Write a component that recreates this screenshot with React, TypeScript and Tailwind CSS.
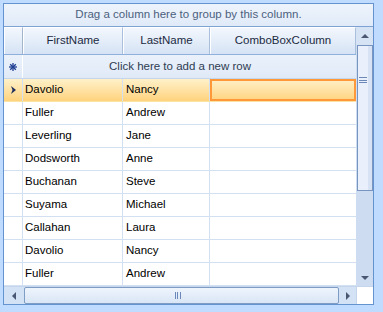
import React from "react";

const rows = [
  ["Davolio", "Nancy"],
  ["Fuller", "Andrew"],
  ["Leverling", "Jane"],
  ["Dodsworth", "Anne"],
  ["Buchanan", "Steve"],
  ["Suyama", "Michael"],
  ["Callahan", "Laura"],
  ["Davolio", "Nancy"],
  ["Fuller", "Andrew"],
];

const Arrow = ({ dir }: { dir: "up" | "down" | "left" | "right" }) => {
  const pts = {
    up: "0,4 4,0 8,4",
    down: "0,0 8,0 4,4",
    left: "4,0 4,8 0,4",
    right: "0,0 0,8 4,4",
  }[dir];
  const vertical = dir === "up" || dir === "down";
  return (
    <svg width={vertical ? 8 : 4} height={vertical ? 4 : 8} viewBox={vertical ? "0 0 8 4" : "0 0 4 8"}>
      <polygon points={pts} fill="#4b5673" />
    </svg>
  );
};

export default function App() {
  return (
    <div className="w-[383px] h-[312px] bg-[#bfdbff] pt-[3px] pl-[3px] font-['Liberation_Sans',sans-serif] text-[11.5px] text-black">
      <div className="w-[371px] h-[302px] border border-[#6593cf] bg-white flex flex-col">
        {/* Group panel */}
        <div className="h-[23px] border-b border-[#7ea3d3] bg-gradient-to-b from-[#eef4fc] to-[#e0eaf8] flex items-center justify-center text-[#4c5f7e]">
          Drag a column here to group by this column.
        </div>

        <div className="flex h-[259px]">
          {/* Grid */}
          <div className="w-[352px] flex flex-col">
            {/* Header */}
            <div className="flex h-[28px] border-b border-[#8fb0dc]">
              <div className="w-[19px] border-r border-[#a3b5ca] bg-gradient-to-b from-[#f3f7fd] to-[#d5e3f5] border-l border-l-white border-t border-t-white" />
              {[
                ["FirstName", "w-[100px]"],
                ["LastName", "w-[87px]"],
                ["ComboBoxColumn", "w-[146px]"],
              ].map(([label, w]) => (
                <div
                  key={label}
                  className={`${w} flex items-center justify-center border-r border-[#a9bfdb] border-l border-l-white border-t border-t-white bg-gradient-to-b from-[#f3f7fd] to-[#d5e3f5] text-[#1c2a3f]`}
                >
                  {label}
                </div>
              ))}
            </div>

            {/* New row */}
            <div className="flex h-[24px] border-b border-[#c5d6ec] bg-gradient-to-b from-[#eaf1fb] to-[#e0eaf7]">
              <div className="w-[19px] border-r border-white flex items-center justify-center">
                <svg width="8" height="8" viewBox="0 0 8 8">
                  <g stroke="#1f3f93" strokeWidth="1.3">
                    <line x1="4" y1="0" x2="4" y2="8" />
                    <line x1="0" y1="4" x2="8" y2="4" />
                    <line x1="1.2" y1="1.2" x2="6.8" y2="6.8" />
                    <line x1="6.8" y1="1.2" x2="1.2" y2="6.8" />
                  </g>
                </svg>
              </div>
              <div className="flex-1 flex items-center justify-center pr-[19px] text-[#2e3c52]">
                Click here to add a new row
              </div>
            </div>

            {/* Data rows */}
            {rows.map(([first, last], i) => {
              const selected = i === 0;
              return (
                <div
                  key={i}
                  className={`flex h-[23px] border-b ${
                    selected
                      ? "border-[#fbe3a3] bg-gradient-to-b from-[#fff1c9] to-[#ffd37d]"
                      : "border-[#d2e0f2]"
                  }`}
                >
                  <div className="w-[19px] border-r border-[#d2e0f2] flex items-center justify-center">
                    {selected && (
                      <svg width="5" height="8" viewBox="0 0 5 8">
                        <polygon points="0,0 5,4 0,8 1.5,4" fill="#1f2d5c" />
                      </svg>
                    )}
                  </div>
                  <div className="w-[100px] border-r border-[#d2e0f2] flex items-center pl-[2px]">
                    {first}
                  </div>
                  <div className="w-[87px] border-r border-[#d2e0f2] flex items-center pl-[3px]">
                    {last}
                  </div>
                  <div
                    className={`w-[146px] ${
                      selected ? "border-2 border-[#ff9838]" : ""
                    }`}
                  />
                </div>
              );
            })}
          </div>

          {/* Vertical scrollbar */}
          <div className="w-[17px] flex flex-col bg-[#cddcf1]">
            <div className="h-[18px] bg-[#d5e3f5] flex items-center justify-center">
              <Arrow dir="up" />
            </div>
            <div className="h-[146px] ml-[1px] w-[16px] border border-[#7895bf] bg-[#e9f0fb] flex">
              <div className="flex-1 flex items-center justify-center">
                <div className="flex flex-col gap-[1.5px] mt-[-76px]">
                  <div className="w-[8px] h-[1px] bg-[#6a88b8]" />
                  <div className="w-[8px] h-[1px] bg-[#6a88b8]" />
                  <div className="w-[8px] h-[1px] bg-[#6a88b8]" />
                </div>
              </div>
              <div className="w-[4px] bg-[#d7e3f4]" />
            </div>
            <div className="flex-1" />
            <div className="h-[17px] flex items-center justify-center">
              <Arrow dir="down" />
            </div>
          </div>
        </div>

        {/* Horizontal scrollbar */}
        <div className="h-[18px] flex bg-[#d3e2f5] border-t border-[#c5d6ec]">
          <div className="w-[20px] flex items-center justify-center">
            <Arrow dir="left" />
          </div>
          <div className="w-[315px] border border-[#7f9cc4] rounded-[2px] bg-gradient-to-b from-[#eef4fc] to-[#d9e6f6] flex items-center justify-center">
            <div className="flex gap-[1.5px] ml-[-8px]">
              <div className="w-[1px] h-[7px] bg-[#6a88b8]" />
              <div className="w-[1px] h-[7px] bg-[#6a88b8]" />
              <div className="w-[1px] h-[7px] bg-[#6a88b8]" />
            </div>
          </div>
          <div className="w-[17px] flex items-center justify-center">
            <Arrow dir="right" />
          </div>
          <div className="w-[17px] bg-white border-l border-[#c5d6ec]" />
        </div>
      </div>
    </div>
  );
}
